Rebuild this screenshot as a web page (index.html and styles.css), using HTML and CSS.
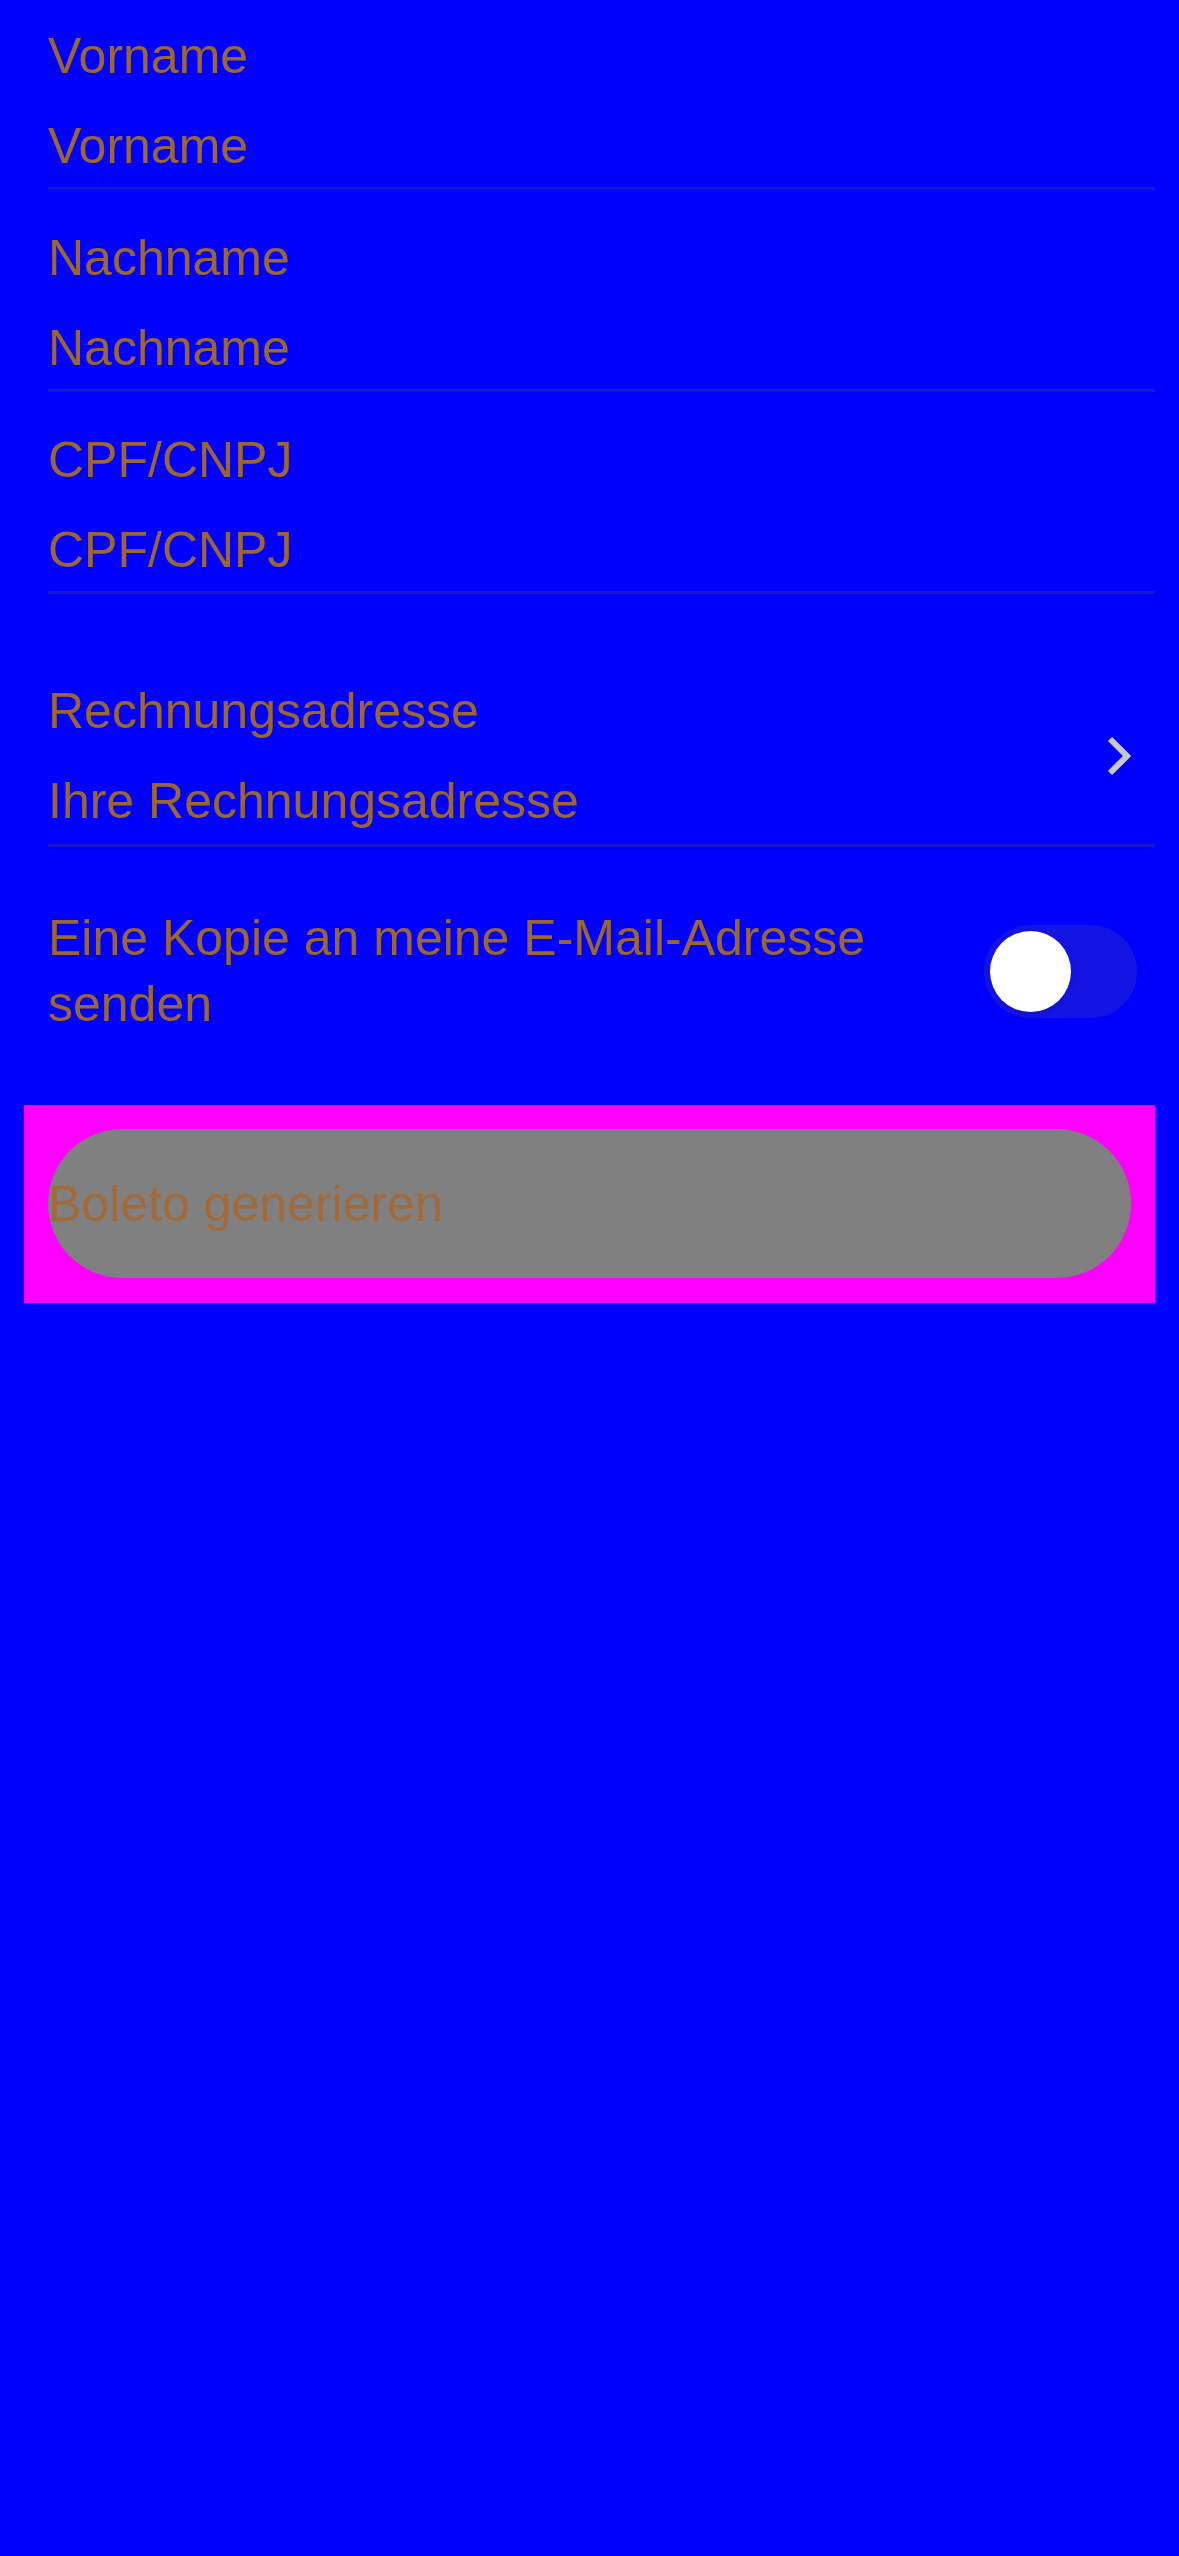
FILE: index.html
```html
<!DOCTYPE html>
<html lang="de">
<head>
<meta charset="utf-8">
<title>Boleto</title>
<link rel="stylesheet" href="styles.css">
</head>
<body>
<main class="page">
  <section class="group">
    <div class="field">
      <div class="line">Vorname</div>
      <div class="line value">Vorname</div>
    </div>
    <div class="field">
      <div class="line">Nachname</div>
      <div class="line value">Nachname</div>
    </div>
    <div class="field">
      <div class="line">CPF/CNPJ</div>
      <div class="line value">CPF/CNPJ</div>
    </div>
  </section>

  <section class="group group-address">
    <div class="field field-link">
      <div class="field-text">
        <div class="line">Rechnungsadresse</div>
        <div class="line value">Ihre Rechnungsadresse</div>
      </div>
      <svg class="chevron" width="26" height="40" viewBox="0 0 26 40" aria-hidden="true">
        <polyline points="4,3 21,20 4,37" fill="none" stroke="#c7c7cc" stroke-width="6" stroke-linejoin="miter" stroke-linecap="butt"/>
      </svg>
    </div>
  </section>

  <div class="toggle-row">
    <div class="toggle-text">Eine Kopie an meine E-Mail-Adresse senden</div>
    <div class="switch"><span class="knob"></span></div>
  </div>

  <div class="cta">
    <button class="cta-button" type="button">Boleto generieren</button>
  </div>
</main>
</body>
</html>
```

FILE: styles.css
```css
html, body {
  margin: 0;
  padding: 0;
  background: #0000ff;
}

body {
  font-family: "Liberation Sans", Arial, sans-serif;
  font-size: 50px;
  color: #9c6630;
  width: 1179px;
  min-height: 2556px;
}

.page {
  display: flex;
  flex-direction: column;
}

.group {
  margin: 0 24px 0 48px;
  display: flex;
  flex-direction: column;
}

.field {
  padding: 38px 0 11px;
  border-bottom: 3px solid #1818c8;
  display: flex;
  flex-direction: column;
}

.group:first-child .field:first-child {
  padding-top: 26px;
}

.line {
  height: 60px;
  line-height: 60px;
  white-space: nowrap;
}

.value {
  margin-top: 30px;
}

.group-address .field {
  padding-top: 87px;
  padding-bottom: 13px;
}

.field-link {
  flex-direction: row !important;
  align-items: center;
  justify-content: space-between;
}

.field-text {
  display: flex;
  flex-direction: column;
}

.chevron {
  display: block;
  margin-right: 23px;
}

.toggle-row {
  margin: 0 42px 0 48px;
  padding: 58px 0 68px;
  display: flex;
  align-items: center;
  gap: 40px;
}

.toggle-text {
  flex: 1;
  line-height: 66px;
}

.switch {
  flex: none;
  width: 153px;
  height: 93px;
  border-radius: 47px;
  background: #1414e4;
  display: flex;
  align-items: center;
  padding: 0 6px;
  box-sizing: border-box;
}

.knob {
  display: block;
  width: 81px;
  height: 81px;
  border-radius: 50%;
  background: #ffffff;
  box-shadow: 0 3px 8px rgba(0, 0, 0, 0.08), 0 3px 1px rgba(0, 0, 0, 0.04);
}

.cta {
  margin: 0 24px;
  padding: 24px 24px 25px;
  background: #ff00ff;
  display: flex;
}

.cta-button {
  flex: 1;
  height: 149px;
  border: none;
  border-radius: 75px;
  background: #808080;
  color: #a26a3a;
  font-family: "Liberation Sans", Arial, sans-serif;
  font-size: 50px;
  text-align: left;
  padding: 0;
  margin: 0;
}
```
